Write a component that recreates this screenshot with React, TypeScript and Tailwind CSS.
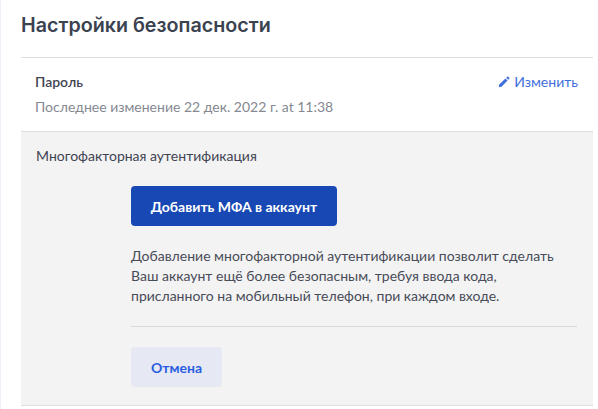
const lato = "font-['Lato','Noto_Sans',sans-serif]"

function PencilIcon() {
  return (
    <svg width="12" height="12" viewBox="0 0 12 12" fill="currentColor">
      <path d="M0.7 11.3 1.3 8.5 7.4 2.4 9.6 4.6 3.5 10.7Z" />
      <path d="M8.2 1.7 9.3 0.7C9.6 0.4 10 0.4 10.3 0.7L11.3 1.7C11.6 2 11.6 2.4 11.3 2.7L10.3 3.8Z" />
    </svg>
  )
}

export default function App() {
  return (
    <div className={`h-[409px] w-[598px] overflow-hidden bg-white border-l border-l-[#eaf0f6] pl-5 pr-[5px] ${lato}`}>
      <h1 className="flex h-[57px] items-center pb-[6px] text-[19.7px] font-semibold text-[#3b4250] font-['Inter',sans-serif]">
        Настройки безопасности
      </h1>

      <section className="flex h-[75px] items-start justify-between border-y border-[#dfdfdf] pl-[14px] pr-[15px] pt-[14px]">
        <div>
          <div className="text-[14px] leading-[20px] font-semibold text-[#3f4452]">Пароль</div>
          <div className="mt-[5px] text-[14px] leading-[20px] text-[#858891]">
            Последнее изменение 22 дек. 2022 г. at 11:38
          </div>
        </div>
        <a className="flex items-center gap-1 text-[14px] leading-[20px] text-[#3f6fdc]">
          <PencilIcon />
          Изменить
        </a>
      </section>

      <section className="h-[274px] border-b border-[#dfdfdf] bg-[#f3f3f3] pt-[14px]">
        <div className="pl-[15px] text-[14px] leading-[20px] text-[#3f4452]">Многофакторная аутентификация</div>
        <div className="ml-[110px] mr-4 mt-5">
          <button className="h-[40px] w-[206px] rounded-[4px] bg-[#1748b4] text-[14px] font-bold text-white">
            Добавить МФА в аккаунт
          </button>
          <p className="mt-5 text-[14px] leading-[20px] text-[#484b58]">
            Добавление многофакторной аутентификации позволит сделать
            <br />
            Ваш аккаунт ещё более безопасным, требуя ввода кода,
            <br />
            присланного на мобильный телефон, при каждом входе.
          </p>
          <div className="mt-5 border-t border-[#d8d8d8]" />
          <button className="mt-5 h-[40px] w-[91px] rounded-[4px] bg-[#e6e8f3] text-[14px] font-bold text-[#2a5ee0]">
            Отмена
          </button>
        </div>
      </section>
    </div>
  )
}
